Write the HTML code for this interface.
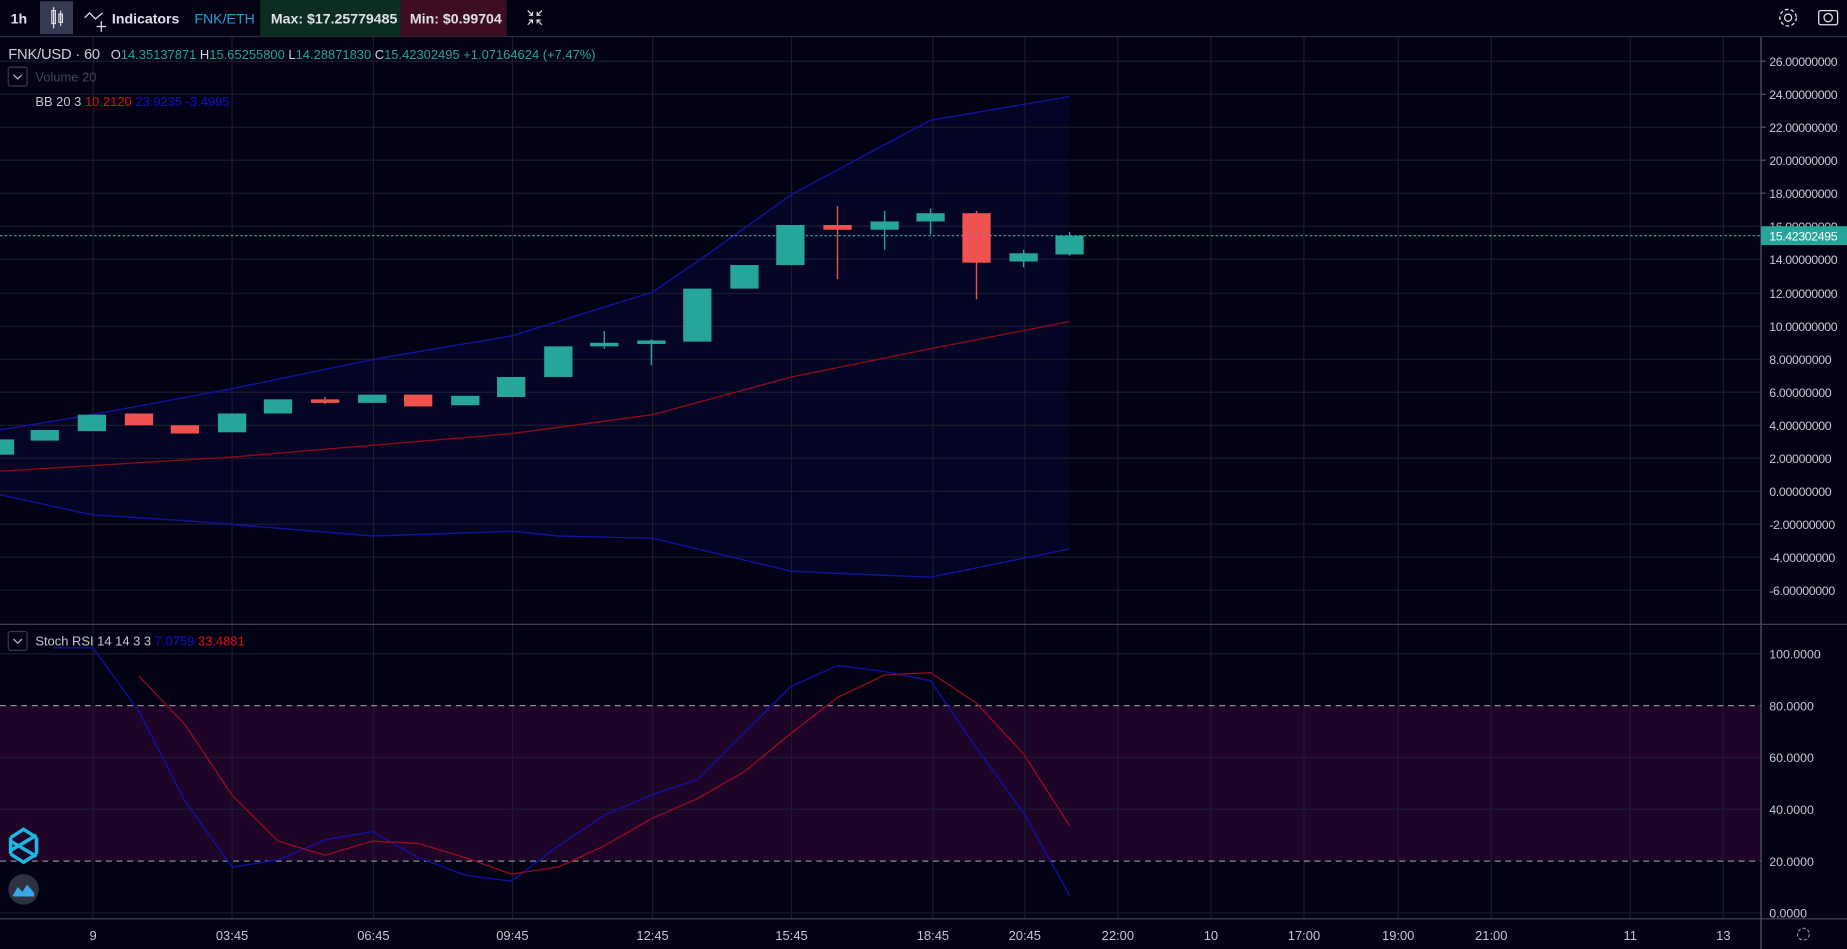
<!DOCTYPE html>
<html><head><meta charset="utf-8"><style>
html,body{margin:0;padding:0;background:#020214;overflow:hidden}
svg{display:block}
text{font-family:"Liberation Sans",sans-serif}
</style></head><body>
<svg width="1847" height="949" viewBox="0 0 1568 805.6" preserveAspectRatio="none" xmlns="http://www.w3.org/2000/svg">
<rect x="0" y="0" width="1568" height="806" fill="#020214"/>
<polygon points="0,365 78,352 197,330 317,305 435,285 554,248 592,222 672,165 790,102 908,82 908,466 790,490 672,485 554,457 474,455 435,451 317,455 157,442 78,437 0,420" fill="#040424"/>
<rect x="0" y="599" width="1495" height="132" fill="#1e0528"/>
<g stroke="#1c1c30" stroke-width="1">
<line x1="79" y1="31" x2="79" y2="780"/><line x1="197" y1="31" x2="197" y2="780"/><line x1="317" y1="31" x2="317" y2="780"/><line x1="435" y1="31" x2="435" y2="780"/><line x1="554" y1="31" x2="554" y2="780"/><line x1="672" y1="31" x2="672" y2="780"/><line x1="792" y1="31" x2="792" y2="780"/><line x1="870" y1="31" x2="870" y2="780"/><line x1="949" y1="31" x2="949" y2="780"/><line x1="1028" y1="31" x2="1028" y2="780"/><line x1="1107" y1="31" x2="1107" y2="780"/><line x1="1187" y1="31" x2="1187" y2="780"/><line x1="1266" y1="31" x2="1266" y2="780"/><line x1="1384" y1="31" x2="1384" y2="780"/><line x1="1463" y1="31" x2="1463" y2="780"/>
<line x1="0" y1="52" x2="1495" y2="52"/><line x1="0" y1="80" x2="1495" y2="80"/><line x1="0" y1="108" x2="1495" y2="108"/><line x1="0" y1="136" x2="1495" y2="136"/><line x1="0" y1="164" x2="1495" y2="164"/><line x1="0" y1="192" x2="1495" y2="192"/><line x1="0" y1="220" x2="1495" y2="220"/><line x1="0" y1="249" x2="1495" y2="249"/><line x1="0" y1="277" x2="1495" y2="277"/><line x1="0" y1="305" x2="1495" y2="305"/><line x1="0" y1="333" x2="1495" y2="333"/><line x1="0" y1="361" x2="1495" y2="361"/><line x1="0" y1="389" x2="1495" y2="389"/><line x1="0" y1="417" x2="1495" y2="417"/><line x1="0" y1="445" x2="1495" y2="445"/><line x1="0" y1="473" x2="1495" y2="473"/><line x1="0" y1="501" x2="1495" y2="501"/>
<line x1="0" y1="555" x2="1495" y2="555"/><line x1="0" y1="643" x2="1495" y2="643"/><line x1="0" y1="687" x2="1495" y2="687"/><line x1="0" y1="775" x2="1495" y2="775"/>
</g>
<line x1="0" y1="599" x2="1495" y2="599" stroke="#8a8a98" stroke-dasharray="5,4"/>
<line x1="0" y1="731" x2="1495" y2="731" stroke="#8a8a98" stroke-dasharray="5,4"/>
<polyline fill="none" stroke="#1212a0" stroke-width="1.2" points="0,365 78,352 197,330 317,305 435,285 554,248 592,222 672,165 790,102 908,82"/>
<polyline fill="none" stroke="#8a0a1a" stroke-width="1.2" points="0,400 197,388 435,368 554,352 672,320 790,296 908,273"/>
<polyline fill="none" stroke="#1212a0" stroke-width="1.2" points="0,420 78,437 157,442 317,455 435,451 474,455 554,457 672,485 790,490 908,466"/>
<g stroke-width="1.2">
<g fill="#26a69a" stroke="#26a69a">
<rect x="-12" y="373" width="24" height="13" stroke="none"/>
<rect x="26" y="365" width="24" height="9" stroke="none"/>
<rect x="66" y="352" width="24" height="14" stroke="none"/>
<rect x="185" y="351" width="24" height="16" stroke="none"/>
<rect x="224" y="339" width="24" height="12" stroke="none"/>
<rect x="304" y="335" width="24" height="7" stroke="none"/>
<rect x="383" y="336" width="24" height="8" stroke="none"/>
<rect x="422" y="320" width="24" height="17" stroke="none"/>
<rect x="462" y="294" width="24" height="26" stroke="none"/>
<line x1="513" y1="281" x2="513" y2="296"/><rect x="501" y="291" width="24" height="3" stroke="none"/>
<line x1="553" y1="288" x2="553" y2="310"/><rect x="541" y="289" width="24" height="3" stroke="none"/>
<rect x="580" y="245" width="24" height="45" stroke="none"/>
<rect x="620" y="225" width="24" height="20" stroke="none"/>
<rect x="659" y="191" width="24" height="34" stroke="none"/>
<line x1="751" y1="179" x2="751" y2="212"/><rect x="739" y="188" width="24" height="7" stroke="none"/>
<line x1="790" y1="177" x2="790" y2="199"/><rect x="778" y="181" width="24" height="7" stroke="none"/>
<line x1="869" y1="212" x2="869" y2="227"/><rect x="857" y="215" width="24" height="7" stroke="none"/>
<line x1="908" y1="197" x2="908" y2="217"/><rect x="896" y="200" width="24" height="16" stroke="none"/>
</g>
<g fill="#ef5350" stroke="#ef5350">
<rect x="106" y="351" width="24" height="10" stroke="none"/>
<rect x="145" y="361" width="24" height="7" stroke="none"/>
<line x1="276" y1="337" x2="276" y2="343"/><rect x="264" y="339" width="24" height="3" stroke="none"/>
<rect x="343" y="335" width="24" height="10" stroke="none"/>
<line x1="711" y1="175" x2="711" y2="237"/><rect x="699" y="191" width="24" height="4" stroke="none"/>
<line x1="829" y1="179" x2="829" y2="254"/><rect x="817" y="181" width="24" height="42" stroke="none"/>
</g>
</g>
<line x1="0" y1="200" x2="1495" y2="200" stroke="#26a69a" stroke-dasharray="2,2"/>
<polyline fill="none" stroke="#1010b0" stroke-width="1.1" points="45,550 79,550 118,604 157,680 197,736 236,730 276,713 316,706 355,728 395,743 434,748 474,718 513,692 553,675 592,662 632,622 671,583 711,565 751,570 790,578 829,635 869,690 908,760"/>
<polyline fill="none" stroke="#9a0a20" stroke-width="1.1" points="118,574 157,615 197,675 236,714 276,726 316,714 355,716 395,728 434,742 474,736 513,718 553,695 592,678 632,655 671,623 711,592 751,573 790,571 829,597 869,640 908,701"/>
<rect x="1495" y="31" width="73" height="775" fill="#020214"/>
<line x1="1495" y1="31" x2="1495" y2="806" stroke="#5a5a6a"/>
<line x1="0" y1="530" x2="1568" y2="530" stroke="#4a4a5a"/>
<line x1="0" y1="780" x2="1568" y2="780" stroke="#4a4a5a"/>
<g fill="#c8c8d0" font-size="10.5">
<text x="1502" y="56" textLength="58">26.00000000</text><text x="1502" y="84" textLength="58">24.00000000</text><text x="1502" y="112" textLength="58">22.00000000</text><text x="1502" y="140" textLength="58">20.00000000</text><text x="1502" y="168" textLength="58">18.00000000</text><text x="1502" y="196" textLength="58">16.00000000</text><text x="1502" y="224" textLength="58">14.00000000</text><text x="1502" y="253" textLength="58">12.00000000</text><text x="1502" y="281" textLength="58">10.00000000</text><text x="1502" y="309" textLength="53">8.00000000</text><text x="1502" y="337" textLength="53">6.00000000</text><text x="1502" y="365" textLength="53">4.00000000</text><text x="1502" y="393" textLength="53">2.00000000</text><text x="1502" y="421" textLength="53">0.00000000</text><text x="1502" y="449" textLength="56">-2.00000000</text><text x="1502" y="477" textLength="56">-4.00000000</text><text x="1502" y="505" textLength="56">-6.00000000</text>
<text x="1502" y="559">100.0000</text><text x="1502" y="603">80.0000</text><text x="1502" y="647">60.0000</text><text x="1502" y="691">40.0000</text><text x="1502" y="735">20.0000</text><text x="1502" y="779">0.0000</text>
</g>
<rect x="1495" y="192" width="73" height="16" fill="#26a69a"/>
<text x="1502" y="204" font-size="10.5" fill="#fff" textLength="58">15.42302495</text>
<g stroke="#5a5a6a"><line x1="1495" y1="52" x2="1499" y2="52"/><line x1="1495" y1="80" x2="1499" y2="80"/><line x1="1495" y1="108" x2="1499" y2="108"/><line x1="1495" y1="136" x2="1499" y2="136"/><line x1="1495" y1="164" x2="1499" y2="164"/></g>
<circle cx="1531" cy="793" r="5" fill="none" stroke="#888" stroke-width="1" stroke-dasharray="3,1.5"/>
<g fill="#c8c8d0" font-size="11" text-anchor="middle">
<text x="79" y="798">9</text><text x="197" y="798">03:45</text><text x="317" y="798">06:45</text><text x="435" y="798">09:45</text><text x="554" y="798">12:45</text><text x="672" y="798">15:45</text><text x="792" y="798">18:45</text><text x="870" y="798">20:45</text><text x="949" y="798">22:00</text><text x="1028" y="798">10</text><text x="1107" y="798">17:00</text><text x="1187" y="798">19:00</text><text x="1266" y="798">21:00</text><text x="1384" y="798">11</text><text x="1463" y="798">13</text>
</g>
<rect x="0" y="0" width="1568" height="31" fill="#020214"/>
<line x1="0" y1="31" x2="1568" y2="31" stroke="#2e2e45"/>
<text x="9" y="20" font-size="12" font-weight="bold" fill="#e0e0e8">1h</text>
<rect x="34" y="1" width="28" height="28" fill="#363a52"/>
<g stroke="#e0e0e8" fill="none" stroke-width="1"><rect x="44" y="9" width="3" height="11"/><line x1="45.5" y1="6" x2="45.5" y2="24"/><rect x="50" y="12" width="3" height="7"/><line x1="51.5" y1="9" x2="51.5" y2="22"/></g>
<g stroke="#e0e0e8" fill="none" stroke-width="1.1"><polyline points="72,15 76,11 81,16 87,11"/><line x1="86" y1="18" x2="86" y2="27"/><line x1="82" y1="22.5" x2="90" y2="22.5"/></g>
<text x="95" y="20" font-size="12" font-weight="bold" fill="#e0e0e8">Indicators</text>
<text x="165" y="20" font-size="12" fill="#1fa3d6">FNK/ETH</text>
<rect x="221" y="0" width="119" height="31" fill="#0c2e22"/>
<text x="230" y="20" font-size="12" font-weight="bold" fill="#e0e0e8">Max: $17.25779485</text>
<rect x="340" y="0" width="90" height="31" fill="#3d0e22"/>
<text x="348" y="20" font-size="12" font-weight="bold" fill="#e0e0e8">Min: $0.99704</text>
<g stroke="#e0e0e8" fill="none" stroke-width="1"><path d="M448,9 L452,13 M452,10 V13 H449 M460,9 L456,13 M456,10 V13 H459 M448,21 L452,17 M452,20 V17 H449 M460,21 L456,17 M456,20 V17 H459"/></g>
<g stroke="#e0e0e8" fill="none" stroke-width="1.1"><circle cx="1518" cy="15" r="3"/><circle cx="1518" cy="15" r="7" stroke-dasharray="3,2"/><rect x="1544" y="9" width="16" height="12" rx="1.5"/><circle cx="1552" cy="15" r="3.5"/></g>
<text x="7" y="50" font-size="12.5" fill="#d0d0d8" textLength="78">FNK/USD · 60</text>
<text x="94" y="50" font-size="11" fill="#d0d0d8">O<tspan fill="#26a69a">14.35137871</tspan> H<tspan fill="#26a69a">15.65255800</tspan> L<tspan fill="#26a69a">14.28871830</tspan> C<tspan fill="#26a69a">15.42302495 +1.07164624 (+7.47%)</tspan></text>
<rect x="7" y="57" width="16" height="16" rx="2" fill="none" stroke="#3a3a4a"/>
<polyline points="11.5,63.5 15,67 18.5,63.5" fill="none" stroke="#c0c0c8"/>
<text x="30" y="69" font-size="11" fill="#44445a">Volume 20</text>
<text x="30" y="90" font-size="11" fill="#c8c8d0">BB 20 3 <tspan fill="#e01010">10.2120</tspan> <tspan fill="#1010c8">23.9235</tspan> <tspan fill="#1010c8">-3.4995</tspan></text>
<rect x="7" y="536" width="16" height="16" rx="2" fill="none" stroke="#3a3a4a"/>
<polyline points="11.5,542.5 15,546 18.5,542.5" fill="none" stroke="#c0c0c8"/>
<text x="30" y="548" font-size="11" fill="#c8c8d0">Stoch RSI 14 14 3 3 <tspan fill="#1010c8">7.0759</tspan> <tspan fill="#e01010">33.4881</tspan></text>
<g fill="none" stroke="#1fb6e0" stroke-width="3"><polyline points="9,711 20,704 31,711"/><polyline points="9,722 31,709"/><polyline points="9,714 31,727"/><polyline points="9,725 20,732 31,725"/><line x1="9" y1="711" x2="9" y2="725"/><line x1="31" y1="711" x2="31" y2="725"/></g>
<circle cx="20" cy="755" r="13" fill="#2e3142"/>
<path d="M11,760 L15,753 L19,757 L23,751 L29,758 L29,761 L11,761 Z" fill="#3aa8e8"/>
</svg>
</body></html>
